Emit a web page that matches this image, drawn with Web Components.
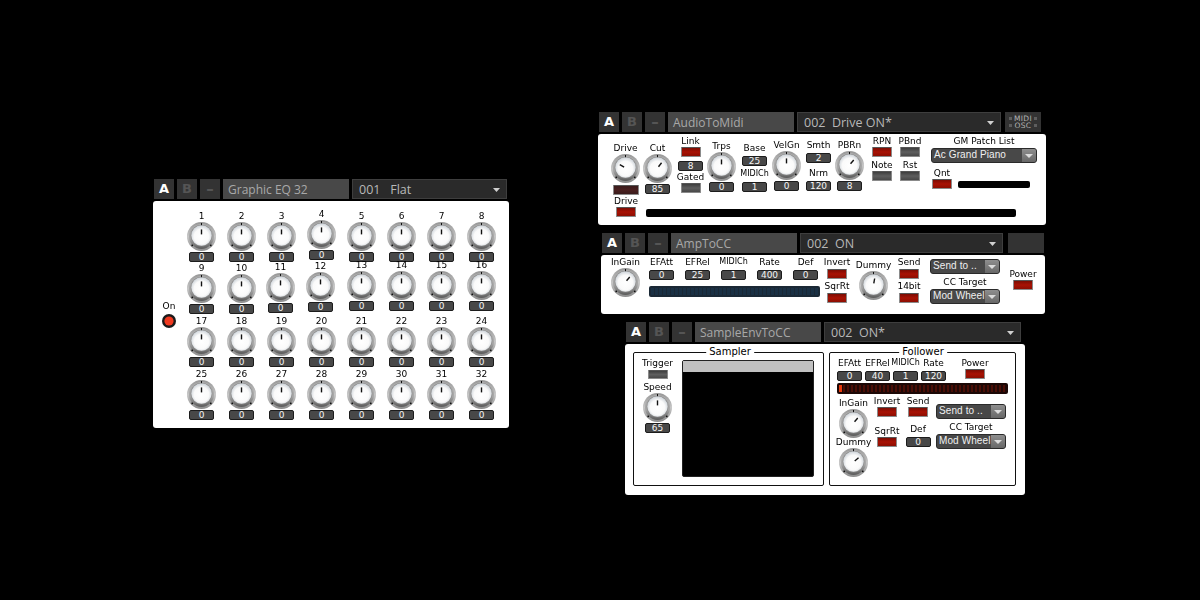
<!DOCTYPE html>
<html>
<head>
<meta charset="utf-8">
<title>Rack</title>
<style>
  html, body { margin: 0; background: #000; }
  body { position: relative; width: 1200px; height: 600px; overflow: hidden; font-family: "DejaVu Sans", sans-serif; }
  .row { display: flex; align-items: flex-start; }
  .col { display: flex; flex-direction: column; align-items: flex-start; }
  .tight { font-size: 8px; }
</style>
</head>
<body>

<!-- Graphic EQ -->
<rack-panel style="left:153px;top:179px" w="356" h="227" name="Graphic EQ 32" preset="001&#160;&#160;&#160;Flat" pw="155">
  <div class="row">
    <rack-col w="32" t="99" style="margin-left:0">
      <rack-label>On</rack-label>
      <rack-lamp style="margin-top:2px"></rack-lamp>
    </rack-col>
    <eq-grid id="eq"></eq-grid>
  </div>
</rack-panel>

<!-- AudioToMidi -->
<rack-panel style="left:598px;top:112px" w="448" h="91" name="AudioToMidi" preset="002&#160;&#160;Drive ON*" pw="204" extra="midi">
  <div class="row" style="padding-left:12px">
    <rack-col w="31" t="8">
      <rack-knob label="Drive" angle="-60"></rack-knob>
      <rack-led state="dim" style="margin-top:2px;width:26px"></rack-led>
    </rack-col>
    <rack-col w="33" t="8"><rack-knob label="Cut" value="85" angle="38"></rack-knob></rack-col>
    <rack-col w="33" t="1">
      <rack-label>Link</rack-label>
      <rack-led state="on"></rack-led>
      <rack-value style="margin-top:4px">8</rack-value>
      <rack-label>Gated</rack-label>
      <rack-led></rack-led>
    </rack-col>
    <rack-col w="29" t="6"><rack-knob label="Trps" value="0"></rack-knob></rack-col>
    <rack-col w="37" t="8">
      <rack-label>Base</rack-label>
      <rack-value style="margin-top:2px">25</rack-value>
      <rack-label class="tight" style="margin-top:2px">MIDICh</rack-label>
      <rack-value style="margin-top:2px">1</rack-value>
    </rack-col>
    <rack-col w="27" t="5"><rack-knob label="VelGn" value="0"></rack-knob></rack-col>
    <rack-col w="37" t="5">
      <rack-label>Smth</rack-label>
      <rack-value style="margin-top:2px">2</rack-value>
      <rack-label style="margin-top:4px">Nrm</rack-label>
      <rack-value style="margin-top:2px">120</rack-value>
    </rack-col>
    <rack-col w="25" t="5"><rack-knob label="PBRn" value="8" angle="40"></rack-knob></rack-col>
    <rack-col w="40" t="1">
      <rack-label>RPN</rack-label>
      <rack-led state="on"></rack-led>
      <rack-label style="margin-top:2px">Note</rack-label>
      <rack-led></rack-led>
    </rack-col>
    <rack-col w="16" t="1">
      <rack-label>PBnd</rack-label>
      <rack-led></rack-led>
      <rack-label style="margin-top:2px">Rst</rack-label>
      <rack-led></rack-led>
    </rack-col>
    <rack-col w="106" t="1" style="margin-left:13px">
      <rack-label>GM Patch List</rack-label>
      <rack-combo w="106" style="margin-top:1px">Ac Grand Piano</rack-combo>
      <div class="row" style="align-self:flex-start;margin-top:4px">
        <rack-col w="22">
          <rack-label>Qnt</rack-label>
          <rack-led state="on"></rack-led>
        </rack-col>
        <rack-bar style="margin:14px 0 0 5px;width:72px;height:7px"></rack-bar>
      </div>
    </rack-col>
  </div>
  <div class="row" style="padding-left:12px">
    <rack-col w="32">
      <rack-label>Drive</rack-label>
      <rack-led state="on"></rack-led>
    </rack-col>
    <rack-bar style="margin:14px 0 0 4px;width:370px;height:8px"></rack-bar>
  </div>
</rack-panel>

<!-- AmpToCC -->
<rack-panel style="left:601px;top:233px" w="444" h="59" name="AmpToCC" preset="002&#160;&#160;ON" pw="203" extra="blank">
  <div class="row" style="padding-left:10px">
    <rack-col w="29" t="1"><rack-knob label="InGain" angle="40"></rack-knob></rack-col>
    <div class="col" style="margin:1px 0 0 4px">
      <div class="row">
        <rack-col w="35"><rack-label>EFAtt</rack-label><rack-value style="margin-top:2px">0</rack-value></rack-col>
        <rack-col w="35" style="margin-left:1px"><rack-label>EFRel</rack-label><rack-value style="margin-top:2px">25</rack-value></rack-col>
        <rack-col w="35" style="margin-left:1px"><rack-label class="tight">MIDICh</rack-label><rack-value style="margin-top:2px">1</rack-value></rack-col>
        <rack-col w="35" style="margin-left:1px"><rack-label>Rate</rack-label><rack-value style="margin-top:2px">400</rack-value></rack-col>
        <rack-col w="35" style="margin-left:1px"><rack-label>Def</rack-label><rack-value style="margin-top:2px">0</rack-value></rack-col>
      </div>
      <rack-meter tone="blue" style="margin:6px 0 0 5px;width:171px"></rack-meter>
    </div>
    <rack-col w="20" t="1" style="margin-left:4px">
      <rack-label>Invert</rack-label>
      <rack-led state="on" style="margin-top:1px"></rack-led>
      <rack-label style="margin-top:1px">SqrRt</rack-label>
      <rack-led state="on" style="margin-top:1px"></rack-led>
    </rack-col>
    <rack-col w="29" t="4" style="margin-left:12px"><rack-knob label="Dummy" angle="10"></rack-knob></rack-col>
    <rack-col w="20" t="1" style="margin-left:11px">
      <rack-label>Send</rack-label>
      <rack-led state="on" style="margin-top:1px"></rack-led>
      <rack-label style="margin-top:1px">14bit</rack-label>
      <rack-led state="on" style="margin-top:1px"></rack-led>
    </rack-col>
    <rack-col w="70" t="4" style="margin-left:11px">
      <rack-combo w="70">Send to ..</rack-combo>
      <rack-label style="margin-top:2px">CC Target</rack-label>
      <rack-combo w="70" style="margin-top:1px">Mod Wheel</rack-combo>
    </rack-col>
    <rack-col w="20" t="13" style="margin-left:13px">
      <rack-label>Power</rack-label>
      <rack-led state="on"></rack-led>
    </rack-col>
  </div>
</rack-panel>

<!-- SampleEnvToCC -->
<rack-panel style="left:625px;top:322px" w="400" h="151" name="SampleEnvToCC" preset="002&#160;&#160;ON*" pw="197">
  <div class="row" style="padding:8px 0 0 8px">
    <rack-frame title="Sampler" style="width:191px;height:134px" tx="96">
      <div class="row">
        <rack-col w="47" t="4">
          <rack-label>Trigger</rack-label>
          <rack-led style="margin-top:1px;height:9px"></rack-led>
          <rack-label style="margin-top:2px">Speed</rack-label>
          <rack-knob value="65"></rack-knob>
        </rack-col>
        <sample-view style="margin:7px 0 0 1px"></sample-view>
      </div>
    </rack-frame>
    <rack-frame title="Follower" style="width:187px;height:134px;margin-left:5px" tx="93">
      <div class="row">
        <rack-col w="27" t="4" style="margin-left:6px"><rack-label>EFAtt</rack-label><rack-value style="margin-top:2px">0</rack-value></rack-col>
        <rack-col w="27" t="4" style="margin-left:1px"><rack-label>EFRel</rack-label><rack-value style="margin-top:2px">40</rack-value></rack-col>
        <rack-col w="27" t="4" style="margin-left:1px"><rack-label class="tight">MIDICh</rack-label><rack-value style="margin-top:2px">1</rack-value></rack-col>
        <rack-col w="27" t="4" style="margin-left:1px"><rack-label>Rate</rack-label><rack-value style="margin-top:2px">120</rack-value></rack-col>
        <rack-col w="20" t="4" style="margin-left:18px"><rack-label>Power</rack-label><rack-led state="on"></rack-led></rack-col>
      </div>
      <rack-meter tone="red" style="margin:2px 0 0 7px;width:171px"></rack-meter>
      <div class="row">
        <rack-col w="29" t="3" style="margin-left:9px">
          <rack-knob label="InGain" angle="40"></rack-knob>
          <rack-knob label="Dummy" angle="50" style="margin-top:-2px"></rack-knob>
        </rack-col>
        <rack-col w="20" t="1" style="margin-left:9px">
          <rack-label>Invert</rack-label>
          <rack-led state="on"></rack-led>
          <rack-label style="margin-top:8px">SqrRt</rack-label>
          <rack-led state="on"></rack-led>
        </rack-col>
        <rack-col w="20" t="1" style="margin-left:11px">
          <rack-label>Send</rack-label>
          <rack-led state="on"></rack-led>
          <rack-label style="margin-top:6px">Def</rack-label>
          <rack-value style="margin-top:2px">0</rack-value>
        </rack-col>
        <rack-col w="70" t="10" style="margin-left:8px">
          <rack-combo w="70">Send to ..</rack-combo>
          <rack-label style="margin-top:2px">CC Target</rack-label>
          <rack-combo w="70" style="margin-top:1px">Mod Wheel</rack-combo>
        </rack-col>
      </div>
    </rack-frame>
  </div>
</rack-panel>

<script>
/**
 * Small set of rack widgets. Each one renders into an open shadow root
 * from its attributes; panels and frames pass their content through a slot.
 */

class RackBase extends HTMLElement {
  constructor() {
    super();
    this.attachShadow({ mode: 'open' });
  }

  connectedCallback() {
    this.render();
  }
}

class RackLabel extends RackBase {
  render() {
    this.shadowRoot.innerHTML = `
      <style>
        :host {
          display: block;
          height: 12px;
          line-height: 12px;
          font-family: "DejaVu Sans", sans-serif;
          font-size: 9px;
          color: #000;
          white-space: nowrap;
          text-align: center;
          will-change: opacity;
        }
      </style>
      <slot></slot>
    `;
  }
}

class RackValue extends RackBase {
  render() {
    this.shadowRoot.innerHTML = `
      <style>
        :host {
          display: block;
          flex: none;
          box-sizing: border-box;
          width: 25px;
          height: 10px;
          line-height: 9px;
          background: #484848;
          border: 1px solid #1c1c1c;
          border-radius: 2px;
          font-family: "DejaVu Sans", sans-serif;
          font-size: 9px;
          color: #f4f4f4;
          text-align: center;
        }
      </style>
      <slot></slot>
    `;
  }
}

class RackLed extends RackBase {
  render() {
    const state = this.getAttribute('state') || 'off';
    const fill = {
      on: 'linear-gradient(#7c0c02, #a81204 50%, #8c0e02)',
      dim: 'linear-gradient(#3a1c1c, #4a2020 50%, #3a1c1c)',
      off: 'linear-gradient(#3e3e3e, #5e5e5e 50%, #484848)'
    }[state];
    this.shadowRoot.innerHTML = `
      <style>
        :host {
          display: block;
          flex: none;
          box-sizing: border-box;
          width: 20px;
          height: 10px;
          background: ${fill};
          border: 1px solid #8a8a8a;
          border-top-color: #555;
          border-radius: 1px;
        }
      </style>
    `;
  }
}

class RackLamp extends RackBase {
  render() {
    this.shadowRoot.innerHTML = `
      <style>
        :host { display: block; flex: none; width: 14px; height: 14px; }
        svg { display: block; }
      </style>
      <svg width="14" height="14" viewBox="0 0 14 14">
        <circle cx="7" cy="7" r="7" fill="#1a1a1a"/>
        <circle cx="7" cy="7" r="4.6" fill="#ef3a20"/>
      </svg>
    `;
  }
}

class RackBar extends RackBase {
  render() {
    this.shadowRoot.innerHTML = `
      <style>
        :host { display: block; flex: none; background: #000; border-radius: 2px; }
      </style>
    `;
  }
}

class RackMeter extends RackBase {
  render() {
    const blue = this.getAttribute('tone') === 'blue';
    const stripes = blue
      ? 'repeating-linear-gradient(90deg, #1a3044 0 3px, #1a2835 3px 4px)'
      : 'repeating-linear-gradient(90deg, #4a0e06 0 2px, #200806 2px 4px)';
    const first = blue ? '' : '<i></i>';
    this.shadowRoot.innerHTML = `
      <style>
        :host {
          display: block;
          flex: none;
          box-sizing: border-box;
          height: 11px;
          padding: 2px;
          background: ${blue ? '#1a2835' : '#1c0806'};
          border-radius: 2px;
        }
        div { height: 100%; background: ${stripes}; }
        i { display: block; width: 3px; height: 100%; background: #e83a0c; }
      </style>
      <div>${first}</div>
    `;
  }
}

class RackCombo extends RackBase {
  render() {
    const w = this.getAttribute('w') || '70';
    this.shadowRoot.innerHTML = `
      <style>
        :host {
          display: flex;
          flex: none;
          box-sizing: border-box;
          width: ${w}px;
          height: 15px;
          background: #484848;
          border: 1px solid #2a2a2a;
          border-radius: 3px;
          overflow: hidden;
          font-family: "Liberation Sans", sans-serif;
          font-size: 10px;
          line-height: 12px;
          letter-spacing: .1px;
          color: #f0f0f0;
        }
        span { flex: 1; padding-left: 2px; white-space: nowrap; }
        b {
          flex: none;
          display: flex;
          align-items: center;
          justify-content: center;
          width: 14px;
          background: linear-gradient(#8e8e8e, #686868);
        }
        svg { display: block; }
      </style>
      <span><slot></slot></span>
      <b><svg width="8" height="4" viewBox="0 0 8 4"><path d="M0 0H8L4 4Z" fill="#dcdcdc"/></svg></b>
    `;
  }
}

class RackKnob extends RackBase {
  render() {
    const label = this.getAttribute('label');
    const value = this.getAttribute('value');
    const angle = this.getAttribute('angle') || '0';
    this.shadowRoot.innerHTML = `
      <style>
        :host {
          display: flex;
          flex: none;
          flex-direction: column;
          align-items: center;
          width: 29px;
        }
        svg { display: block; flex: none; }
      </style>
      ${label ? `<rack-label>${label}</rack-label>` : ''}
      <svg width="29" height="29" viewBox="0 0 29 29">
        <defs>
          <linearGradient id="ring" x1="0" y1="0" x2="0" y2="1">
            <stop offset="0" stop-color="#969696"/>
            <stop offset="0.5" stop-color="#c6c6c6"/>
            <stop offset="1" stop-color="#8c8c8c"/>
          </linearGradient>
          <linearGradient id="well" x1="0" y1="0" x2="0" y2="1">
            <stop offset="0" stop-color="#b0b0b0"/>
            <stop offset="0.6" stop-color="#a4a4a4"/>
            <stop offset="1" stop-color="#5a5a5a"/>
          </linearGradient>
          <radialGradient id="cap" cx="0.5" cy="0.55" r="0.55">
            <stop offset="0" stop-color="#fff"/>
            <stop offset="0.65" stop-color="#fafafa"/>
            <stop offset="1" stop-color="#ccd2d8"/>
          </radialGradient>
        </defs>
        <circle cx="14.5" cy="14.5" r="14.5" fill="url(#ring)"/>
        <circle cx="14.5" cy="14.5" r="12.5" fill="url(#well)"/>
        <circle cx="14.5" cy="13.5" r="10.8" fill="#8a8a8a"/>
        <circle cx="14.5" cy="13.5" r="10.2" fill="url(#cap)"/>
        <path d="M14.5 1V3.2" stroke="#111" stroke-width="1"/>
        <rect x="4.4" y="22.6" width="1.6" height="1.6" fill="#111"/>
        <rect x="23" y="22.6" width="1.6" height="1.6" fill="#111"/>
        <path d="M14.5 12.4V7.4" stroke="#111" stroke-width="1.4" transform="rotate(${angle} 14.5 14)"/>
      </svg>
      ${value !== null ? `<rack-value style="margin-top:1px">${value}</rack-value>` : ''}
    `;
  }
}

class RackCol extends RackBase {
  render() {
    this.style.width = (this.getAttribute('w') || 20) + 'px';
    this.style.paddingTop = (this.getAttribute('t') || 0) + 'px';
    this.shadowRoot.innerHTML = `
      <style>
        :host {
          display: flex;
          flex: none;
          flex-direction: column;
          align-items: center;
        }
      </style>
      <slot></slot>
    `;
  }
}

class RackFrame extends RackBase {
  render() {
    const title = this.getAttribute('title');
    const tx = this.getAttribute('tx') || 96;
    this.shadowRoot.innerHTML = `
      <style>
        :host {
          display: block;
          flex: none;
          position: relative;
          box-sizing: border-box;
          border: 1px solid #111;
          border-radius: 2px;
        }
        span {
          position: absolute;
          top: -7px;
          left: ${tx}px;
          transform: translateX(-50%);
          padding: 0 3px;
          background: #fff;
          font-family: "DejaVu Sans", sans-serif;
          font-size: 10px;
          line-height: 12px;
          color: #000;
          white-space: nowrap;
        }
      </style>
      <span>${title}</span>
      <slot></slot>
    `;
  }
}

class SampleView extends RackBase {
  render() {
    this.shadowRoot.innerHTML = `
      <style>
        :host {
          display: block;
          flex: none;
          box-sizing: border-box;
          width: 132px;
          height: 117px;
          background: #000;
          border: 1px solid #222;
          border-radius: 2px;
        }
        div { height: 11px; background: #c0c0c0; }
      </style>
      <div></div>
    `;
  }
}

class RackPanel extends RackBase {
  render() {
    const name = this.getAttribute('name');
    const preset = this.getAttribute('preset');
    const pw = this.getAttribute('pw');
    const extra = this.getAttribute('extra');
    let tail = '';
    if (extra === 'midi') {
      tail = `<div class="tail midi"><i></i><span>MIDI<br>OSC</span><i></i></div>`;
    } else if (extra === 'blank') {
      tail = `<div class="tail" style="margin-left:2px"></div>`;
    }
    this.shadowRoot.innerHTML = `
      <style>
        :host {
          position: absolute;
          display: block;
          width: ${this.getAttribute('w')}px;
          font-family: "Open Sans", sans-serif;
        }
        header {
          display: flex;
          gap: 3px;
          height: 20px;
          padding: 0 1px 2px 1px;
        }
        header button {
          all: unset;
          flex: none;
          width: 20px;
          height: 20px;
          background: #333;
          color: #555;
          font: bold 13px/20px "DejaVu Sans", sans-serif;
          text-align: center;
        }
        header button:first-child { color: #fff; }
        header button:nth-child(3) { font-size: 15px; }
        .name {
          flex: none;
          box-sizing: border-box;
          width: 126px;
          padding-left: 5px;
          background: #484848;
          color: #a8a8a8;
          font-size: 12px;
          line-height: 21px;
          white-space: nowrap;
        }
        .preset {
          flex: none;
          position: relative;
          box-sizing: border-box;
          width: ${pw}px;
          padding-left: 6px;
          background: #2a2a2a;
          border: 1px solid #3e3e3e;
          color: #b8b8b8;
          font-size: 12.5px;
          line-height: 19px;
          white-space: nowrap;
        }
        .preset svg { position: absolute; right: 6px; top: 8px; }
        .tail {
          flex: none;
          display: flex;
          align-items: center;
          justify-content: center;
          gap: 2px;
          width: 36px;
          background: #333;
        }
        .midi {
          margin-left: 1px;
          color: #b4b4b4;
          font: 7.5px/7px "DejaVu Sans", sans-serif;
          letter-spacing: .3px;
          text-align: center;
        }
        .midi i { width: 3px; height: 10px; background: repeating-linear-gradient(#5e5e5e 0 3px, transparent 3px 7px); }
        main {
          box-sizing: border-box;
          height: ${this.getAttribute('h')}px;
          background: #fff;
          border-radius: 3px;
        }
      </style>
      <header>
        <button>A</button><button>B</button><button>&#8211;</button>
        <div class="name">${name}</div>
        <div class="preset">${preset}<svg width="7" height="4" viewBox="0 0 7 4"><path d="M0 0H7L3.5 4Z" fill="#d0d0d0"/></svg></div>
        ${tail}
      </header>
      <main><slot></slot></main>
    `;
  }
}

// 32 band grid; a few knobs sit a pixel or two off the raster, as in the plugin
class EqGrid extends RackBase {
  render() {
    const nudge = { 4: [0, -2], 11: [-1, -1], 12: [-1, -2], 13: [0, -3], 14: [0, -3], 15: [0, -3], 16: [0, -3] };
    let cells = '';
    for (let i = 1; i <= 32; i++) {
      const [dx, dy] = nudge[i] || [0, 0];
      cells += `<rack-knob label="${i}" value="0" style="margin:${dy}px 0 0 ${dx}px"></rack-knob>`;
    }
    this.shadowRoot.innerHTML = `
      <style>
        :host {
          display: grid;
          grid-template-columns: repeat(8, 40px);
          grid-template-rows: 52px 53px 53px 53px;
          justify-items: start;
          align-items: start;
          padding: 9px 0 0 2px;
        }
      </style>
      ${cells}
    `;
  }
}

customElements.define('rack-label', RackLabel);
customElements.define('rack-value', RackValue);
customElements.define('rack-led', RackLed);
customElements.define('rack-lamp', RackLamp);
customElements.define('rack-bar', RackBar);
customElements.define('rack-meter', RackMeter);
customElements.define('rack-combo', RackCombo);
customElements.define('rack-knob', RackKnob);
customElements.define('rack-col', RackCol);
customElements.define('rack-frame', RackFrame);
customElements.define('sample-view', SampleView);
customElements.define('rack-panel', RackPanel);
customElements.define('eq-grid', EqGrid);
</script>
</body>
</html>
